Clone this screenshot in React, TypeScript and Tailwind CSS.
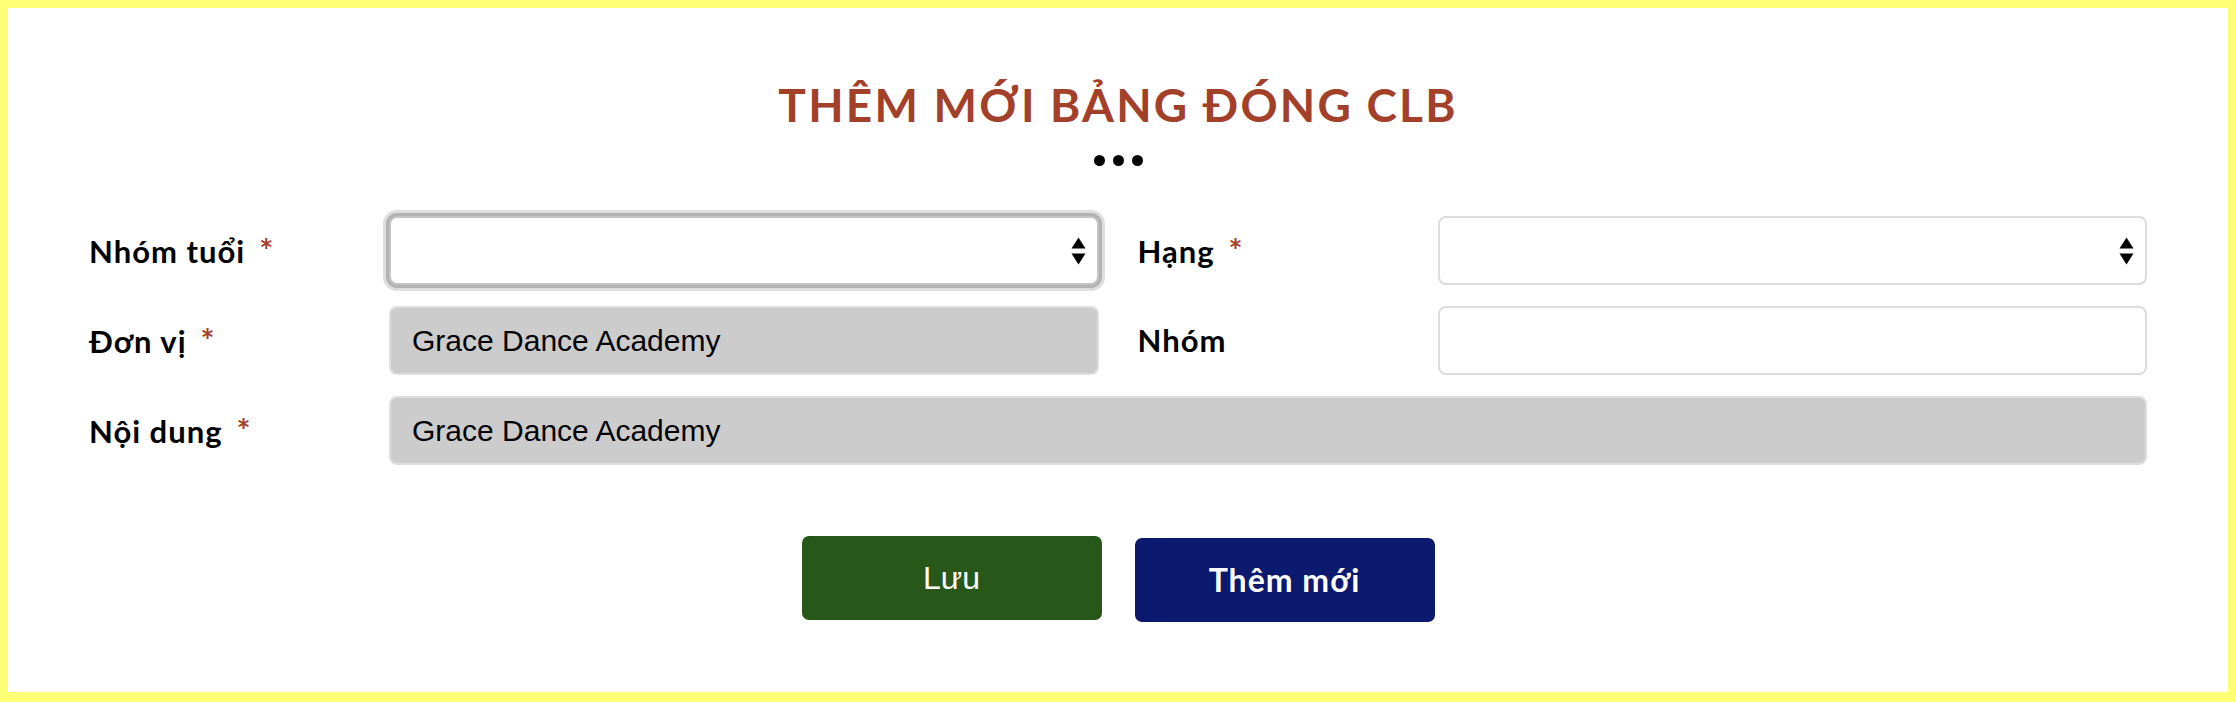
import { ReactNode } from "react";

const labelFont = { fontFamily: "Lato, 'Noto Sans', sans-serif" };
const inputFont = { fontFamily: "'Liberation Sans', Arial, sans-serif" };

const Required = () => (
  <span className="ml-[14px] text-[33px] text-[#a3402a]">*</span>
);

type FieldProps = {
  label: string;
  required?: boolean;
  children: ReactNode;
};

const Field = ({ label, required, children }: FieldProps) => (
  <div className="flex h-[69px] items-center">
    <label
      className="w-[300px] shrink-0 text-[31px] font-bold tracking-[1px] text-black"
      style={labelFont}
    >
      {label}
      {required && <Required />}
    </label>
    <div className="h-full flex-1">{children}</div>
  </div>
);

// native-looking up/down arrows for the select boxes
const Arrows = () => (
  <svg
    width="15"
    height="29"
    viewBox="0 0 15 29"
    className="absolute right-[11px] top-1/2 -translate-y-1/2"
  >
    <path d="M7.5 1 L14.5 12 L0.5 12 Z" fill="#000" />
    <path d="M0.5 17 L14.5 17 L7.5 28 Z" fill="#000" />
  </svg>
);

const SelectBox = ({ focused }: { focused?: boolean }) => (
  <div
    className={
      focused
        ? "relative h-full rounded-[8px] border-2 border-[#c4c4c4] bg-white shadow-[0_0_0_3px_#b3b3b3,0_0_0_6px_#dedede]"
        : "relative h-full rounded-[8px] border-2 border-[#dddddd] bg-white"
    }
  >
    <Arrows />
  </div>
);

const TextBox = ({ value, disabled }: { value?: string; disabled?: boolean }) => (
  <div
    className={
      disabled
        ? "flex h-full items-center rounded-[8px] border-2 border-[#dedede] bg-[#cccccc] pl-[21px] text-[30px] text-black"
        : "flex h-full items-center rounded-[8px] border-2 border-[#dddddd] bg-white pl-[21px] text-[30px] text-black"
    }
    style={inputFont}
  >
    {value}
  </div>
);

export default function App() {
  return (
    <div className="h-[702px] w-full bg-[#ffff75] px-[8px] pb-[10px] pt-[8px]">
      <div className="flex h-full flex-col items-center bg-white pt-[74px]">
        <h1
          className="text-[46px] font-bold leading-[46px] tracking-[2.2px] text-[#a3402a]"
          style={labelFont}
        >
          THÊM MỚI BẢNG ĐÓNG CLB
        </h1>
        <div className="mt-[27px] flex gap-[8px]">
          <span className="h-[11px] w-[11px] rounded-full bg-black" />
          <span className="h-[11px] w-[11px] rounded-full bg-black" />
          <span className="h-[11px] w-[11px] rounded-full bg-black" />
        </div>

        <div className="mt-[50px] flex w-full flex-col gap-[21px] pl-[81px] pr-[81px]">
          <div className="grid grid-cols-2 gap-x-[39px]">
            <Field label="Nhóm tuổi" required>
              <SelectBox focused />
            </Field>
            <Field label="Hạng" required>
              <SelectBox />
            </Field>
          </div>
          <div className="grid grid-cols-2 gap-x-[39px]">
            <Field label="Đơn vị" required>
              <TextBox value="Grace Dance Academy" disabled />
            </Field>
            <Field label="Nhóm">
              <TextBox />
            </Field>
          </div>
          <Field label="Nội dung" required>
            <TextBox value="Grace Dance Academy" disabled />
          </Field>
        </div>

        <div className="mt-[71px] flex items-start gap-[33px]">
          <button
            type="button"
            className="h-[84px] w-[300px] rounded-[7px] bg-[#27581a] text-[32px] text-white"
            style={inputFont}
          >
            Lưu
          </button>
          <button
            type="button"
            className="mt-[2px] h-[84px] w-[300px] rounded-[7px] bg-[#0b1a6e] text-[32px] font-bold tracking-[1px] text-white"
            style={labelFont}
          >
            Thêm mới
          </button>
        </div>
      </div>
    </div>
  );
}
